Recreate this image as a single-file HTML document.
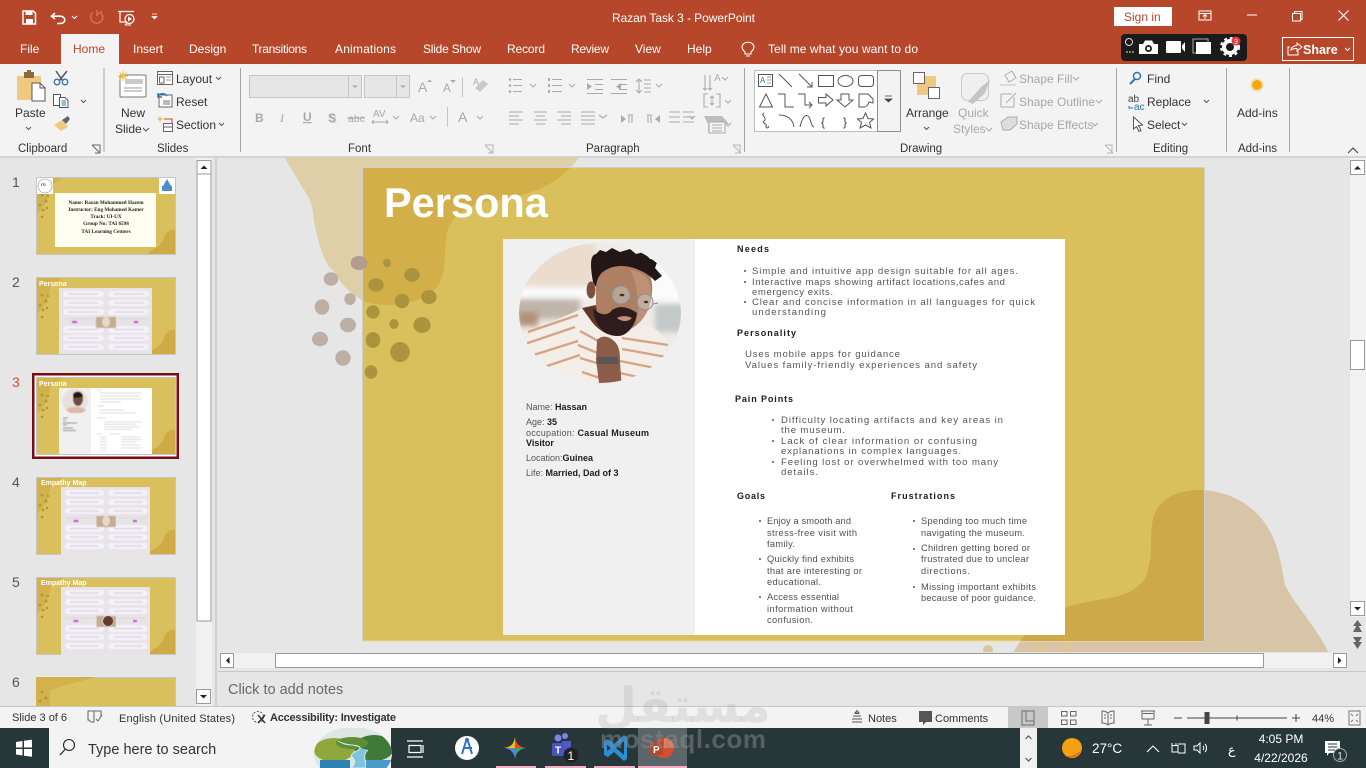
<!DOCTYPE html>
<html lang="en"><head><meta charset="utf-8"><title>Razan Task 3 - PowerPoint</title>
<style>
html,body{margin:0;padding:0;width:1366px;height:768px;overflow:hidden;background:#E6E6E6}
svg{display:block;font-family:"Liberation Sans","DejaVu Sans",sans-serif}
.t{font-size:12px;fill:#fff}
.r{font-size:12px;fill:#333}
.g{font-size:11.5px;fill:#333}
.d{font-size:12px;fill:#A8A8A8}
.s{font-size:11px;fill:#333}
.sn{font-size:9px;fill:#555}
.sb{font-size:9px;fill:#1c1c1c;font-weight:bold}
.k{fill:none;stroke:#555;stroke-width:1}
.ig{fill:none;stroke:#ABABAB;stroke-width:1.1}
.cd{fill:none;stroke:#AAA;stroke-width:1.1}
.tn{font-size:14px;fill:#555}
</style></head><body>
<svg width="1366" height="768" viewBox="0 0 1366 768" xmlns="http://www.w3.org/2000/svg">
<defs>
<clipPath id="sl"><rect x="363" y="168" width="841" height="473"/></clipPath>
<clipPath id="wk"><rect x="218" y="157" width="1132" height="495"/></clipPath>
<clipPath id="ph"><ellipse cx="600" cy="313" rx="81" ry="70"/></clipPath>
<clipPath id="art"><ellipse cx="353" cy="754" rx="39" ry="27"/></clipPath>
<filter id="bl" x="-20%" y="-20%" width="140%" height="140%"><feGaussianBlur stdDeviation="3"/></filter>
<filter id="bs"><feGaussianBlur stdDeviation=".35"/></filter>
<filter id="bt"><feGaussianBlur stdDeviation=".4"/></filter>
<path id="tb" d="M280 150L310 200C313 208 313 215 314 222C320 250 325 265 333 270C345 292 362 305 385 305C410 306 432 296 440 283C446 270 444 250 447 233C452 212 470 205 490 201C530 196 560 185 581 155Z"/>
<path id="bb" d="M1012 655C1025 630 1045 612 1065 608C1080 602 1100 600 1115 597C1135 592 1146 582 1148 570C1153 550 1150 540 1152 525C1155 500 1175 490 1200 490C1235 491 1260 510 1272 535C1280 552 1282 570 1285 585C1295 605 1315 625 1330 655Z"/>
<g id="dots">
<ellipse cx="331" cy="279" rx="7.3" ry="6.7"/><ellipse cx="322" cy="307" rx="7.3" ry="7.7"/><ellipse cx="350" cy="299" rx="5.7" ry="6"/><ellipse cx="348" cy="325" rx="8" ry="7.3"/><ellipse cx="320" cy="339" rx="8" ry="7.3"/><ellipse cx="343" cy="358" rx="7.7" ry="7.7"/>
<ellipse cx="359" cy="263" rx="8.3" ry="7"/>
<ellipse cx="387" cy="263" rx="4" ry="4.3"/><ellipse cx="376" cy="285" rx="7.7" ry="6.7"/><ellipse cx="412" cy="275" rx="7.7" ry="7"/><ellipse cx="402" cy="301" rx="7.3" ry="7.3"/><ellipse cx="429" cy="297" rx="7.7" ry="7"/><ellipse cx="373" cy="312" rx="6.7" ry="6.7"/><ellipse cx="394" cy="324" rx="4.7" ry="5"/><ellipse cx="422" cy="325" rx="8.7" ry="8"/><ellipse cx="373" cy="340" rx="7.3" ry="8"/><ellipse cx="400" cy="352" rx="9.7" ry="10"/><ellipse cx="371" cy="372" rx="6.3" ry="6.7"/>
</g>
<g id="tbase">
<rect width="140" height="78" fill="#DAC05C"/>
<path d="M0 0H28C22 5 14 7 14 13C11 24 7 34 0 36Z" fill="#D3B24C"/>
<path d="M110 78C118 70 126 70 128 60C130 54 136 52 140 53V78Z" fill="#CFAA45"/>
<g fill="#AE953F"><circle cx="6" cy="18" r="1.3"/><circle cx="10" cy="24" r="1.5"/><circle cx="4" cy="28" r="1.3"/><circle cx="12" cy="19" r="1.2"/><circle cx="7" cy="33" r="1.4"/><circle cx="11" cy="31" r="1.2"/><circle cx="6" cy="40" r="1.3"/></g>
<rect x=".5" y=".5" width="139" height="77" fill="none" stroke="#C6C6C6"/>
</g>
<g id="pills" filter="url(#bt)">
<g fill="#F6F0FA"><rect x="3" y="2" width="41" height="6" rx="3"/><rect x="48" y="2" width="41" height="6" rx="3"/><rect x="3" y="11" width="41" height="6" rx="3"/><rect x="48" y="11" width="41" height="6" rx="3"/><rect x="3" y="20" width="41" height="6" rx="3"/><rect x="48" y="20" width="41" height="6" rx="3"/><rect x="3" y="37" width="41" height="7" rx="3"/><rect x="48" y="37" width="41" height="7" rx="3"/><rect x="3" y="46" width="41" height="6" rx="3"/><rect x="48" y="46" width="41" height="6" rx="3"/><rect x="3" y="55" width="41" height="6" rx="3"/><rect x="48" y="55" width="41" height="6" rx="3"/></g>
<g stroke="#A9A6AE" stroke-width=".6"><path d="M8 5H38M54 5H84M8 14H38M54 14H84M8 23H38M54 23H84M8 40.500H38M54 40.500H84M8 49H38M54 49H84M8 58H38M54 58H84"/></g>
<rect x="36" y="28" width="20" height="11" fill="#C4AE8F"/><ellipse cx="46" cy="33" rx="4" ry="5" fill="#E8D8CC"/>
<rect x="12" y="32" width="5" height="2" fill="#C94FD8"/><rect x="74" y="32" width="4" height="2" fill="#C94FD8"/>
<path d="M5 30H34M58 30H88" stroke="#CFCFCF" stroke-width=".5"/>
</g>
</defs>

<!-- title bar -->
<rect width="1366" height="64" fill="#B7472A"/>
<rect x="61" y="34" width="58" height="31" fill="#F3F3F3"/>
<!-- QAT -->
<path d="M23 11H33L35.500 13V24H23Z" fill="none" stroke="#fff" stroke-width="1.500"/><rect x="25.500" y="11" width="7" height="4" fill="#fff"/><rect x="26" y="19" width="7" height="5" fill="#fff"/>
<path d="M55 13L51.500 16.200L55 19M52 16.200H60C63.500 16.200 64.800 18.500 64.800 20S63.500 23.500 60 23.500H57" fill="none" stroke="#fff" stroke-width="1.600"/>
<path d="M72 16L74.500 18.500L77 16" fill="none" stroke="#fff"/>
<path d="M93 12.500A6 6 0 1 0 101 13M97 10V15L102 11" fill="none" stroke="#D97350" stroke-width="1.400"/>
<path d="M118 11.500H134M120 12V22H127" fill="none" stroke="#fff" stroke-width="1.200"/><circle cx="129.500" cy="19" r="4.500" fill="none" stroke="#fff" stroke-width="1.200"/><path d="M128 16.500L132 19L128 21.500Z" fill="#fff"/><path d="M125 25H131M127 22L125 25" stroke="#fff" fill="none"/>
<path d="M152 14H157M152 16.500H157L154.500 19Z" fill="#fff" stroke="#fff" stroke-width=".7"/>
<text class="t" x="612" y="22" textLength="143">Razan Task 3  -  PowerPoint</text>
<rect x="1114" y="7" width="58" height="19" fill="#fff"/>
<text x="1124" y="21" font-size="12" fill="#B7472A">Sign in</text>
<path d="M1199 11H1211V20H1199ZM1199 13.500H1211" fill="none" stroke="#fff"/><path d="M1205 19V15M1203 16.500L1205 14.500L1207 16.500" fill="none" stroke="#fff"/>
<path d="M1247 15H1257" stroke="#fff"/>
<path d="M1292.500 13.500H1300.500V21H1292.500ZM1294.500 13V11.500H1302V19.500H1300.500" fill="none" stroke="#fff"/>
<path d="M1338.500 10.500L1348.500 20.500M1348.500 10.500L1338.500 20.500" stroke="#fff" stroke-width="1.100"/>
<!-- tabs -->
<text class="t" x="20" y="53">File</text><text x="73" y="53" font-size="12" fill="#B7472A">Home</text><text class="t" x="133" y="53">Insert</text><text class="t" x="189" y="53">Design</text><text class="t" x="252" y="53" textLength="55">Transitions</text><text class="t" x="335" y="53" textLength="61">Animations</text><text class="t" x="423" y="53" textLength="58">Slide Show</text><text class="t" x="507" y="53" textLength="38">Record</text><text class="t" x="571" y="53" textLength="38">Review</text><text class="t" x="635" y="53">View</text><text class="t" x="687" y="53">Help</text><text class="t" x="768" y="53" textLength="150">Tell me what you want to do</text>
<path d="M745 52C742 49 741 47 743 44.500C745 41.500 751 41.500 753 44.500C755 47 754 49 751 52V54H745ZM746 56H750" fill="none" stroke="#fff" stroke-width="1.100"/>
<!-- recorder -->
<rect x="1121" y="34" width="126" height="27" rx="4" fill="#1B1B1B"/>
<circle cx="1129" cy="42" r="3.500" fill="none" stroke="#ddd"/><path d="M1126 52H1128M1129 52H1131M1132 52H1134" stroke="#ddd"/>
<path d="M1139 44H1143L1145 40.500H1152L1154 44H1158V54H1139Z" fill="#fff"/><circle cx="1148.500" cy="48.500" r="3.500" fill="#1B1B1B"/><circle cx="1148.500" cy="48.500" r="1.700" fill="#fff"/>
<rect x="1166" y="41" width="15" height="12" rx="1" fill="#fff"/><path d="M1182 45.500L1185 42V52L1182 48.500Z" fill="#fff"/>
<rect x="1193" y="39" width="15" height="14" fill="none" stroke="#aaa"/><rect x="1196" y="42" width="15" height="12" fill="#fff"/>
<circle cx="1230" cy="47" r="6" fill="none" stroke="#fff" stroke-width="4"/><circle cx="1230" cy="47" r="9" fill="none" stroke="#fff" stroke-width="2" stroke-dasharray="3 3"/>
<circle cx="1236" cy="41" r="4.500" fill="#E9343B"/><text x="1234" y="44" font-size="7" fill="#fff">3</text>
<rect x="1282.500" y="37.500" width="71" height="23" fill="none" stroke="#fff"/>
<path d="M1290 47H1288V55H1298V51M1291 50C1291 47 1295 45.500 1297 45.500V43L1302 47L1297 51V48.500C1295 48.500 1292 49 1291 50Z" fill="none" stroke="#fff"/>
<text x="1303" y="54" font-size="12.500" font-weight="bold" fill="#fff">Share</text><path d="M1345 48L1347.500 50.500L1350 48" stroke="#fff" fill="none"/>

<!-- ribbon -->
<rect y="64" width="1366" height="92" fill="#F3F3F3"/><rect y="156" width="1366" height="2" fill="#D4D4D4"/>
<g fill="#A6A6A6"><rect x="103.500" y="68" width="1" height="84"/><rect x="240" y="68" width="1" height="84"/><rect x="744" y="68" width="1" height="84"/><rect x="1116" y="68" width="1" height="84"/><rect x="1226" y="68" width="1" height="84"/><rect x="1289" y="68" width="1" height="84"/></g>
<!-- clipboard -->
<rect x="17" y="76" width="24" height="24" rx="1" fill="#EFC981"/><rect x="24" y="72" width="10" height="6" fill="#8C6A3C"/><rect x="27" y="70" width="4" height="4" fill="#8C6A3C"/>
<path d="M32 83H40L45 88V101H32Z" fill="#fff" stroke="#555"/><path d="M40 83V88H45" fill="none" stroke="#555"/>
<text class="r" x="15" y="117">Paste</text><path d="M26 127L28.500 129.500L31 127" class="k"/>
<path d="M56 71L63 81M67 71L59 81" stroke="#555" stroke-width="1.500" fill="none"/><circle cx="57" cy="82" r="2.800" fill="none" stroke="#2E75B6" stroke-width="1.300"/><circle cx="65" cy="82" r="2.800" fill="none" stroke="#2E75B6" stroke-width="1.300"/>
<path d="M53.500 94.500H60.500V105.500H53.500Z" fill="#fff" stroke="#555"/><path d="M59.500 97.500H65L68 100.500V107.500H59.500Z" fill="#fff" stroke="#555"/><path d="M61.500 101H66M61.500 103H66M61.500 105H66" stroke="#2E75B6"/>
<path d="M81 100L83.500 102.500L86 100" class="k" stroke-width="1.300"/>
<path d="M54 125L62 120L68 127L61 131Z" fill="#EFC981"/><path d="M62 120L68 116L70 119L66 124Z" fill="#666"/>
<text class="g" x="18" y="152">Clipboard</text><path d="M92 145H100V153M92 145L100 153M95 153H100" fill="none" stroke="#666"/>
<!-- slides -->
<rect x="120" y="75" width="26" height="22" rx="1" fill="#fff" stroke="#777"/><rect x="125" y="79" width="18" height="5" fill="#C9C9C9"/><path d="M124 88H142M124 91H142" stroke="#999"/>
<path d="M118 76H128M123 71V81M119.500 72.500L126.500 79.500M126.500 72.500L119.500 79.500" stroke="#F2C14E"/><circle cx="123" cy="76" r="2.500" fill="#F2C14E"/>
<text class="r" x="121" y="117">New</text><text class="r" x="115" y="133">Slide</text><path d="M143 128L146 131L149 128" class="k"/>
<rect x="157.500" y="71.500" width="15" height="13" fill="#fff" stroke="#666"/><path d="M158 74.500H172M159.500 77H164V83H159.500Z" stroke="#666" fill="none"/><path d="M166 77H171M166 80H171" stroke="#999"/>
<text class="r" x="176" y="83">Layout</text><path d="M216 77L218.500 79.500L221 77" class="k"/>
<rect x="159" y="95" width="13" height="12" fill="#fff" stroke="#666"/><rect x="163" y="100" width="7" height="5" fill="#bbb"/><path d="M158 96C160 93 165 93 167 96M158 93V97H162" stroke="#2E75B6" fill="none" stroke-width="1.500"/>
<text class="r" x="176" y="106">Reset</text>
<path d="M157 119H163M160 116V122" stroke="#F2C14E"/><circle cx="160" cy="119" r="1.500" fill="#F2C14E"/><path d="M164 119H172V124H164" stroke="#D24726" fill="none"/><rect x="163.500" y="123.500" width="9" height="8" fill="#fff" stroke="#666"/><path d="M164 127H172" stroke="#666"/>
<text class="r" x="176" y="129">Section</text><path d="M219 123L221.500 125.500L224 123" class="k"/>
<text class="g" x="157" y="152">Slides</text>
<!-- font -->
<rect x="249.500" y="75.500" width="112" height="22" fill="#E6E6E6" stroke="#C6C6C6"/><path d="M348.500 76V97" stroke="#C6C6C6"/><path d="M352 85.500L355 88L358 85.500Z" fill="#ABABAB"/>
<rect x="364.500" y="75.500" width="45" height="22" fill="#E6E6E6" stroke="#C6C6C6"/><path d="M396.500 76V97" stroke="#C6C6C6"/><path d="M400 85.500L403 88L406 85.500Z" fill="#ABABAB"/>
<text x="418" y="92" font-size="14" fill="#ABABAB">A</text><path d="M427 82L429.500 79.500L432 82Z" fill="#ABABAB"/>
<text x="443" y="92" font-size="11.500" fill="#ABABAB">A</text><path d="M450 80H456L453 83Z" fill="#ABABAB"/>
<path d="M462.500 77V97" stroke="#C6C6C6"/>
<text x="473" y="85" font-size="9" fill="#ABABAB">A</text><path d="M475 88L483 80L488 84L480 92Z" fill="#C9C9C9"/>
<text x="255" y="122" font-size="12" font-weight="bold" fill="#A8A8A8">B</text>
<text x="280" y="122" font-size="12" font-style="italic" font-family="Liberation Serif" fill="#A8A8A8">I</text>
<text x="303" y="121" font-size="12" font-weight="bold" fill="#A8A8A8" text-decoration="underline">U</text>
<text x="329" y="123" font-size="12" font-weight="bold" fill="#D0D0D0">S</text><text x="328" y="122" font-size="12" font-weight="bold" fill="#A8A8A8">S</text>
<text x="348" y="122" font-size="10.500" fill="#A8A8A8">abc</text><path d="M347 118H365" stroke="#A8A8A8"/>
<text x="373" y="117" font-size="10" fill="#A8A8A8">AV</text><path d="M372 122H388M374 120L372 122L374 124M386 120L388 122L386 124" fill="none" stroke="#A8A8A8"/>
<path d="M393 116L396 119L399 116" class="cd"/>
<text x="410" y="122" font-size="12" fill="#A8A8A8">Aa</text><path d="M430 116L433 119L436 116" class="cd"/>
<path d="M447.500 107V127" stroke="#C6C6C6"/>
<text x="458" y="122" font-size="14" fill="#A8A8A8">A</text><path d="M477 116L480 119L483 116" class="cd"/>
<text class="g" x="348" y="152">Font</text><path d="M485 145H493V153H488M485 145L493 153" fill="none" stroke="#B5B5B5"/>
<!-- paragraph -->
<g fill="#ABABAB"><circle cx="510" cy="79.500" r="1.300"/><circle cx="510" cy="85.500" r="1.300"/><circle cx="510" cy="91.500" r="1.300"/><rect x="548" y="78" width="2" height="3"/><rect x="548" y="84" width="2" height="3"/><rect x="548" y="90" width="2" height="3"/></g>
<g class="ig">
<path d="M513 79.500H522M513 85.500H522M513 91.500H522M552 79.500H562M552 85.500H562M552 91.500H562"/><path d="M587 79.500H603M595 84.500H603M595 89.500H603M587 93.500H603M611 79.500H627M619 84.500H627M619 89.500H627M611 93.500H627"/>
<path d="M639 80V92M636 82L639 79L642 82M636 90L639 93L642 90M644 80H651M644 84H651M644 88H651M644 92H651"/>
<path d="M530 84L533 87L536 84M569 84L572 87L575 84M656 84L659 87L662 84"/>
<path d="M509 112H523M509 116H519M509 120H523M509 124H519M534 112H547M536 116H545M534 120H547M536 124H545M557 112H571M561 116H571M557 120H571M561 124H571M581 112H595M581 116H595M581 120H595M581 124H595"/>
<path d="M599 115L603 118L607 115"/>
<path d="M629 115V123M632 115V123M628 115H633"/>
<path d="M648 115V123M651 115V123M647 115H652"/>
<path d="M669 112H680M683 112H694M669 117H680M683 117H694M669 122H680M683 122H694"/>
<path d="M689 0"/><path d="M689 116L692 119L695 116" transform="translate(0 0)"/>
<path d="M705 75V90M710 75V90M703 88L705 90L707 88M708 88L710 90L712 88"/>
<path d="M722 77L725 80L728 77"/>
<path d="M708 94H704V107H708M716 94H720V107H716M712 97V104M710 98L712 96L714 98M710 103L712 105L714 103"/>
<path d="M725 100L728 103L731 100"/>
<path d="M725 123L728 126L731 123"/>
</g>
<path d="M587 83L592 86.500L587 90M621 83L616 86.500L621 90M621 115L626 119L621 123ZM660 115L655 119L660 123Z" fill="#ABABAB" transform="translate(0 0)"/>
<text x="714" y="81" font-size="10" fill="#ABABAB">A</text>
<path d="M704 116H722L729 124H712V132H708V124Z" fill="#BDBDBD"/><rect x="709" y="122" width="16" height="11" fill="#F3F3F3" stroke="#ABABAB"/><path d="M712 125H722M712 128H722M712 131H722" stroke="#ABABAB"/>
<text class="g" x="586" y="152">Paragraph</text><path d="M733 145H740V153H735M733 145L741 153" fill="none" stroke="#B5B5B5"/>
<!-- shapes -->
<rect x="754.500" y="70.500" width="146" height="61" fill="#fff" stroke="#BDBDBD"/>
<rect x="877.500" y="70.500" width="23" height="61" fill="#F3F3F3" stroke="#8E8E8E"/>
<path d="M885 96H892M885 99H892L888.500 102Z" fill="#444" stroke="#444" stroke-width=".7"/>
<g fill="none" stroke="#555" stroke-width="1">
<rect x="758.500" y="74.500" width="14" height="12"/><text x="760" y="83" font-size="8" fill="#2E75B6" stroke="none">A</text><path d="M767 77H771M767 80H771M767 83H771" stroke="#999"/>
<path d="M779 74L792 87M799 74L812 87M807 87H812V82"/>
<rect x="818.500" y="75.500" width="15" height="11"/><ellipse cx="845.500" cy="81" rx="7.500" ry="5.500"/><rect x="858.500" y="75.500" width="15" height="11" rx="3"/>
<path d="M766 94L772.500 107H759.500Z"/>
<path d="M778 94H785V107H794M798 94H805V105H812M809 102L812 105L809 108"/>
<path d="M818.500 97.500H826V94L833 100L826 106V103H818.500Z"/><path d="M841 94H849V100H853L845 107L837 100H841Z"/>
<path d="M859 94H868L873 99V103L869 102C868 105 866 107 864 107H859Z"/>
<path d="M764 113C760 115 768 118 764 121C761 123 768 124 766 126C765 129 770 128 768 126"/>
<path d="M779 115C787 115 793 119 794 127M800 127C802 118 805 114 808 116C811 118 811 127 814 127"/>
<text x="821" y="126" font-size="12" fill="#444" stroke="none">{</text><text x="843" y="126" font-size="12" fill="#444" stroke="none">}</text>
<path d="M865.500 113L868 118.500L873.500 119L869.500 122.500L871 128L865.500 125L860 128L861.500 122.500L857.500 119L863 118.500Z"/>
</g>
<!-- arrange -->
<rect x="917" y="76" width="19" height="19" fill="#EFC981"/>
<rect x="913.500" y="72.500" width="11" height="11" fill="#fff" stroke="#666"/>
<rect x="928.500" y="87.500" width="11" height="11" fill="#fff" stroke="#666"/>
<text class="r" x="906" y="117">Arrange</text><path d="M924 127L926.500 129.500L929 127" class="k"/>
<text class="g" x="900" y="152">Drawing</text><path d="M1105 145H1112V153H1107M1105 145L1113 153" fill="none" stroke="#B5B5B5"/>
<rect x="961.500" y="73.500" width="27" height="27" rx="6" fill="#EFEFEF" stroke="#C9C9C9"/><path d="M968 102L981 87L990 80L985 93L973 104Z" fill="#C4C4C4"/>
<text class="d" x="958" y="117">Quick</text><text class="d" x="953" y="133">Styles</text><path d="M986 128L989 131L992 128" class="cd"/>
<path d="M1005 75L1012 71L1016 78L1009 82Z" fill="none" stroke="#ABABAB"/><rect x="1000" y="84" width="16" height="2" fill="#DADADA"/>
<text class="d" x="1019" y="83">Shape Fill</text><path d="M1073 77L1076 80L1079 77" class="cd"/>
<path d="M1001 94H1012M1001 94V107H1014V97M1006 103L1016 93" fill="none" stroke="#ABABAB"/>
<text class="d" x="1019" y="106">Shape Outline</text><path d="M1096 100L1099 103L1102 100" class="cd"/>
<path d="M1001 122L1008 117H1017V124L1010 130H1003Z" fill="#ddd" stroke="#ABABAB"/>
<text class="d" x="1019" y="129">Shape Effects</text><path d="M1092 123L1095 126L1098 123" class="cd"/>
<!-- editing -->
<circle cx="1137" cy="76" r="3.500" fill="none" stroke="#2E75B6" stroke-width="1.500"/><path d="M1135 79L1130 84" stroke="#2E75B6" stroke-width="2"/>
<text class="r" x="1147" y="83">Find</text>
<text x="1128" y="102" font-size="10" fill="#444">ab</text><text x="1134" y="110" font-size="10" fill="#2E75B6">ac</text><path d="M1129 106V108H1133" stroke="#2E75B6" fill="none"/>
<text class="r" x="1147" y="106">Replace</text><path d="M1204 100L1206.500 102.500L1209 100" class="k" stroke-width="1.300"/>
<path d="M1133.500 117L1133.500 129L1136.500 126.500L1139 131.500L1141 130.500L1138.500 125.500L1142.500 125Z" fill="#fff" stroke="#555"/>
<text class="r" x="1147" y="129">Select</text><path d="M1182 123L1184.500 125.500L1187 123" class="k"/>
<text class="g" x="1153" y="152">Editing</text>
<!-- addins -->
<circle cx="1257" cy="85" r="5" fill="#F5A70A"/><circle cx="1257" cy="85" r="6" fill="none" stroke="#F5D48A"/>
<text class="r" x="1237" y="117">Add-ins</text><text class="g" x="1238" y="152">Add-ins</text>
<path d="M1348 153L1353 148L1358 153" fill="none" stroke="#444" stroke-width="1.100"/>

<!-- workspace -->
<rect y="158" width="1366" height="548" fill="#E6E6E6"/>
<g clip-path="url(#wk)">
<use href="#tb" fill="#DFCFA8"/><use href="#bb" fill="#D8C5A8"/>
<g fill="#DDC79A"><circle cx="988" cy="650" r="5"/><circle cx="1040" cy="652" r="7"/><circle cx="1066" cy="650" r="8"/></g>
<use href="#dots" fill="#BDAFA5"/>
<rect x="363" y="168" width="841" height="473" fill="#DAC05C"/>
<rect x="362" y="167" width="843" height="1" fill="#CFCFCF"/><rect x="362" y="168" width="1" height="473" fill="#CFCFCF"/><rect x="1204" y="168" width="1" height="474" fill="#CFCFCF"/>
<rect x="363" y="640.500" width="841" height="1" fill="#EEDCA0"/>
<g clip-path="url(#sl)">
<use href="#tb" fill="#D2AF48"/><use href="#bb" fill="#CDA947"/>
<use href="#dots" fill="#AC933E"/>
</g>
<ellipse cx="359" cy="263" rx="8.300" ry="7" fill="#B39C8F"/>
</g>
<text x="384" y="217" font-size="41.500" font-weight="bold" fill="#fff">Persona</text>
<!-- persona card -->
<rect x="503" y="239" width="562" height="396" fill="#fff"/><rect x="503" y="239" width="192" height="396" fill="#F0F0F0"/>
<!-- photo -->
<g clip-path="url(#ph)">
<rect x="518" y="243" width="164" height="141" fill="#EFEBE8"/>
<g filter="url(#bl)">
<rect x="510" y="240" width="85" height="46" fill="#EBDDCE"/><rect x="510" y="288" width="85" height="10" fill="#FCFCFC"/><rect x="510" y="299" width="70" height="20" fill="#BFB5A8"/><rect x="640" y="240" width="45" height="62" fill="#FBFBFB"/><rect x="655" y="304" width="30" height="28" fill="#C3C8C8"/><rect x="518" y="312" width="20" height="14" fill="#B08F74"/>
</g>
<g filter="url(#bs)">
<path d="M519 345C535 325 565 318 584 307L592 322C600 330 625 340 640 328C650 322 662 330 672 352L670 390H530Z" fill="#F4EEE9"/>
<g stroke="#D6A484" stroke-width="2.400" fill="none"><path d="M528 332L578 315M522 345L575 327M524 358L578 341M532 371L580 355M580 331L600 342M578 345L600 354M580 358L600 364M582 372L600 378M622 338L668 345M622 349L672 358M620 361L670 371M620 373L660 382"/></g>
<path d="M582 308L592 322C600 332 612 338 620 335L628 322L620 300Z" fill="#60392B"/>
<path d="M596 285C593 268 603 258 620 258C642 258 654 272 652 292C651 310 642 325 626 331C610 335 598 325 596 305Z" fill="#AE7F62"/>
<path d="M630 270C645 272 652 280 651 295C650 308 645 318 636 325C640 305 638 285 630 270Z" fill="#BE9176"/>
<ellipse cx="591" cy="290" rx="4.500" ry="8.500" fill="#7C5040"/>
<path d="M593 308C600 316 608 316 612 310C620 305 628 307 637 313C636 324 628 336 618 336C604 336 594 325 593 308Z" fill="#2D1F1B"/>
<path d="M617 318C622 315 628 316 632 318C628 322 622 322 617 318Z" fill="#C58F7C"/>
<path d="M593 282C590 265 590 255 596 254L600 250L606 252L612 248L620 252L630 249L636 254L644 252L650 259L658 260L655 268L662 276L655 281C645 270 625 262 610 268C602 271 597 276 596 287Z" fill="#201613"/>
<circle cx="621" cy="295" r="9" fill="#C7D0CF" fill-opacity=".45" stroke="#8B8F8E"/><circle cx="645" cy="302" r="8" fill="#C7D0CF" fill-opacity=".45" stroke="#8B8F8E"/><path d="M599 284L612 291M630 297L637 299M653 304L658 303" stroke="#8B8F8E"/>
<ellipse cx="622" cy="295" rx="2.400" ry="1.300" fill="#3A3533"/><ellipse cx="646" cy="302" rx="2.200" ry="1.200" fill="#3A3533"/>
<path d="M597 340C603 334 610 337 615 342C620 347 620 355 620 362L622 390H600L596 360Z" fill="#8B5C46"/>
<rect x="597" y="357" width="21" height="7" fill="#5A5654"/>
</g>
</g>
<!-- left info -->
<text class="sn" x="526" y="410">Name: <tspan class="sb">Hassan</tspan></text>
<text class="sn" x="526" y="425">Age: <tspan class="sb">35</tspan></text>
<text class="sn" x="526" y="436" textLength="123">occupation: <tspan class="sb">Casual Museum</tspan></text>
<text class="sb" x="526" y="446">Visitor</text>
<text class="sn" x="526" y="461">Location:<tspan class="sb">Guinea</tspan></text>
<text class="sn" x="526" y="476">Life: <tspan class="sb">Married, Dad of 3</tspan></text>
<!-- right info -->
<g font-size="9" font-weight="bold" fill="#1C1C1C">
<text x="737" y="252" textLength="32">Needs</text><text x="737" y="336" textLength="59">Personality</text><text x="735" y="402" textLength="58">Pain Points</text><text x="737" y="499" textLength="28">Goals</text><text x="891" y="499" textLength="64">Frustrations</text>
</g>
<g font-size="9.600" fill="#555">
<text x="752" y="274" textLength="266">Simple and intuitive app design suitable for all ages.</text>
<text x="752" y="285" textLength="253">Interactive maps showing artifact locations,cafes and</text>
<text x="752" y="295" textLength="81">emergency exits.</text>
<text x="752" y="305" textLength="283">Clear and concise information in all languages for quick</text>
<text x="752" y="315" textLength="74">understanding</text>
<text x="745" y="357" textLength="155">Uses mobile apps for guidance</text>
<text x="745" y="368" textLength="232">Values family-friendly experiences and safety</text>
<text x="781" y="423" textLength="222">Difficulty locating artifacts and key areas in</text>
<text x="781" y="433" textLength="64">the museum.</text>
<text x="781" y="444" textLength="196">Lack of clear information or confusing</text>
<text x="781" y="454" textLength="180">explanations in complex languages.</text>
<text x="781" y="465" textLength="217">Feeling lost or overwhelmed with too many</text>
<text x="781" y="475" textLength="37">details.</text>
</g>
<g font-size="9.300" fill="#4F4F4F">
<text x="767" y="524" textLength="84">Enjoy a smooth and</text><text x="767" y="536" textLength="90">stress-free visit with</text><text x="767" y="547" textLength="28">family.</text>
<text x="767" y="562" textLength="87">Quickly find exhibits</text><text x="767" y="574" textLength="95">that are interesting or</text><text x="767" y="585" textLength="54">educational.</text>
<text x="767" y="600" textLength="72">Access essential</text><text x="767" y="612" textLength="86">information without</text><text x="767" y="623" textLength="46">confusion.</text>
<text x="921" y="524" textLength="106">Spending too much time</text><text x="921" y="536" textLength="104">navigating the museum.</text>
<text x="921" y="551" textLength="109">Children getting bored or</text><text x="921" y="562" textLength="108">frustrated due to unclear</text><text x="921" y="574" textLength="49">directions.</text>
<text x="921" y="590" textLength="115">Missing important exhibits</text><text x="921" y="601" textLength="115">because of poor guidance.</text>
</g>
<g fill="#555"><circle cx="745" cy="271" r="1"/><circle cx="745" cy="282" r="1"/><circle cx="745" cy="302" r="1"/><circle cx="773" cy="420" r="1"/><circle cx="773" cy="441" r="1"/><circle cx="773" cy="462" r="1"/><circle cx="760" cy="521" r="1"/><circle cx="760" cy="559" r="1"/><circle cx="760" cy="597" r="1"/><circle cx="914" cy="521" r="1"/><circle cx="914" cy="549" r="1"/><circle cx="914" cy="587" r="1"/></g>

<!-- thumbnail pane -->
<rect y="158" width="196" height="548" fill="#E6E6E6"/>
<rect x="215" y="158" width="2" height="548" fill="#D0D0D0"/>
<text class="tn" x="12" y="187">1</text>
<text class="tn" x="12" y="287">2</text>
<text x="12" y="387" font-size="14" fill="#D2502E">3</text>
<text class="tn" x="12" y="487">4</text>
<text class="tn" x="12" y="587">5</text>
<text class="tn" x="12" y="687">6</text>
<rect x="32" y="373" width="147" height="86" fill="#7A0C14"/><rect x="34.500" y="375.500" width="142" height="81" fill="#fff"/>
<svg x="36" y="177" width="140" height="78" viewBox="0 0 140 78">
<use href="#tbase"/><rect x="1" y="1" width="16" height="16" fill="#fff"/><circle cx="9" cy="9" r="7" fill="#fff" stroke="#8D8DB0" stroke-width=".6"/><text x="5" y="9" font-size="4" font-weight="bold" fill="#334">ITI</text>
<rect x="123" y="1" width="16" height="16" fill="#fff"/><path d="M127 9L131 2L135 9ZM126 9H136V14H126Z" fill="#4C8FC4"/>
<rect x="19" y="16" width="101" height="54" fill="#FFFEF0"/>
<g font-family="Liberation Serif" font-size="5.200" font-weight="bold" fill="#222" text-anchor="middle"><text x="70" y="27">Name: Razan Mohammed Hazem</text><text x="70" y="34">Instructor: Eng Mohamed Kamer</text><text x="70" y="41">Track: UI-UX</text><text x="70" y="48">Group No: TAI 6598</text><text x="70" y="56">TAI Learning Centers</text></g>
</svg>
<svg x="36" y="277" width="140" height="78" viewBox="0 0 140 78">
<use href="#tbase"/><text x="3" y="9" font-size="7" font-weight="bold" fill="#fff">Persona</text>
<rect x="23" y="11" width="93" height="66" fill="#E6E4E5"/><g transform="translate(24 12)"><use href="#pills"/></g>
</svg>
<svg x="36" y="377" width="140" height="78" viewBox="0 0 140 78">
<use href="#tbase"/><text x="3" y="9" font-size="7" font-weight="bold" fill="#fff">Persona</text>
<rect x="23" y="11" width="93" height="66" fill="#fff"/><rect x="23" y="11" width="32" height="66" fill="#F0F0F0"/>
<g filter="url(#bt)"><ellipse cx="39" cy="24" rx="13" ry="12" fill="#E8E2DC"/><path d="M30 33C34 29 46 29 50 33L46 36H34Z" fill="#D9B9A8"/><ellipse cx="42" cy="22" rx="5" ry="7" fill="#6E4E40"/><path d="M37 17C40 13 47 14 47 20L37 21Z" fill="#201613"/>
<g stroke="#777" stroke-width=".7"><path d="M27 41H32M27 43.500H30M27 46H41M27 48H31M27 51H37M27 53.500H40"/></g>
<g stroke="#BBB" stroke-width=".6"><path d="M61 13H65M64 16H105M64 19H104M64 22H106M64 25H85M61 29H68M63 33H88M63 36H100M61 41H70M68 45H106M68 47.500H100M68 50H104M68 52.500H96M61 57H66M74 57H84M64 60H70M64 62.500H70M64 65H71M64 68H71M64 71H71M64 74H70M85 60H104M85 62.500H106M85 65H100M85 68H104M85 71H106"/></g></g>
</svg>
<svg x="36" y="477" width="140" height="78" viewBox="0 0 140 78">
<use href="#tbase"/><text x="5" y="8" font-size="7" font-weight="bold" fill="#fff">Empathy Map</text>
<rect x="25" y="10" width="89" height="68" fill="#E6E4E5"/><g transform="translate(26 11) scale(.96 1)"><use href="#pills"/></g>
</svg>
<svg x="36" y="577" width="140" height="78" viewBox="0 0 140 78">
<use href="#tbase"/><text x="5" y="8" font-size="7" font-weight="bold" fill="#fff">Empathy Map</text>
<rect x="25" y="10" width="89" height="68" fill="#E6E4E5"/><g transform="translate(26 11) scale(.96 1)"><use href="#pills"/></g><circle cx="72" cy="44" r="5" fill="#5E3E30"/>
</svg>
<svg x="36" y="677" width="140" height="29" viewBox="0 0 140 29">
<use href="#tbase"/><path d="M14 14C25 8 40 6 60 0H0V29H14Z" fill="#D3B24C"/><g fill="#AE953F"><circle cx="6" cy="15" r="1.300"/><circle cx="10" cy="21" r="1.500"/><circle cx="4" cy="24" r="1.300"/></g>
</svg>
<!-- left scrollbar -->
<rect x="196" y="158" width="16" height="548" fill="#F1F1F1"/>
<rect x="197" y="174" width="14" height="447" fill="#fff" stroke="#9A9A9A"/>
<rect x="197" y="160.500" width="14" height="13.500" fill="#fff" stroke="#9A9A9A"/><path d="M200.500 169L204 165.500L207.500 169Z" fill="#222"/>
<rect x="196.500" y="689.500" width="14" height="14" fill="#fff" stroke="#9A9A9A"/><path d="M200 695L203.500 698.500L207 695Z" fill="#222"/>
<!-- right scrollbar -->
<rect x="1350" y="158" width="16" height="495" fill="#F1F1F1"/>
<rect x="1350.500" y="160.500" width="14" height="14" fill="#fff" stroke="#9A9A9A"/><path d="M1354 169.500L1357.500 166L1361 169.500Z" fill="#222"/>
<rect x="1350.500" y="340.500" width="14" height="29" fill="#fff" stroke="#9A9A9A"/>
<rect x="1350.500" y="601.500" width="14" height="14" fill="#fff" stroke="#9A9A9A"/><path d="M1354 607L1357.500 610.500L1361 607Z" fill="#222"/>
<rect x="1350" y="617" width="16" height="36" fill="#E6E6E6"/>
<path d="M1357.500 620L1362 626H1353ZM1357.500 624L1362 632H1353ZM1353 637H1362L1357.500 644ZM1353 642H1362L1357.500 649Z" fill="#666"/>
<!-- horizontal scrollbar -->
<rect x="218" y="652" width="1148" height="19" fill="#E6E6E6"/>
<rect x="220" y="653" width="1127" height="15" fill="#F1F1F1"/>
<rect x="220.500" y="653.500" width="13" height="14" fill="#fff" stroke="#9A9A9A"/><path d="M229.500 657L226 660.500L229.500 664Z" fill="#222"/>
<rect x="275.500" y="653.500" width="988" height="14" fill="#fff" stroke="#9A9A9A"/>
<rect x="1333.500" y="653.500" width="13" height="14" fill="#fff" stroke="#9A9A9A"/><path d="M1338 657L1341.500 660.500L1338 664Z" fill="#222"/>
<rect x="218" y="671" width="1148" height="1" fill="#C8C8C8"/>
<text x="228" y="694" font-size="14.500" fill="#686868">Click to add notes</text>

<!-- status bar -->
<rect y="706" width="1366" height="1" fill="#C6C6C6"/><rect y="707" width="1366" height="21" fill="#F3F3F3"/>
<text class="s" x="12" y="721">Slide 3 of 6</text>
<path d="M88 711H94V722H91L89 720H88ZM94 711H101V717M96 719L98 721L102 715" fill="none" stroke="#666"/>
<text class="s" x="119" y="722" textLength="116">English (United States)</text>
<circle cx="258" cy="717" r="5.500" fill="none" stroke="#555" stroke-dasharray="2 1.500"/><path d="M258 715L265 723M265 715L258 723" stroke="#333" stroke-width="1.500"/>
<text x="270" y="721" font-size="11" font-weight="bold" fill="#333" textLength="126">Accessibility: Investigate</text>
<path d="M852 722H862M852 719H862M853 716H861M855 713.500H859M857 710.500L859 713H855Z" stroke="#555" fill="none"/>
<text class="s" x="868" y="722">Notes</text>
<path d="M919 711H932V722H926L923 725V722H919Z" fill="#555"/>
<text class="s" x="935" y="722">Comments</text>
<rect x="1008" y="707" width="40" height="21" fill="#C8C8C8"/>
<path d="M1022 711H1034V725H1022ZM1026 711V721H1034" fill="none" stroke="#6A6A6A"/>
<path d="M1061.500 711.500H1067V716H1061.500ZM1070.500 711.500H1076V716H1070.500ZM1061.500 720H1067V724.500H1061.500ZM1070.500 720H1076V724.500H1070.500Z" fill="none" stroke="#666"/>
<path d="M1108 713C1105 711 1103 711 1102 711V723C1104 723 1106 723 1108 725C1110 723 1112 723 1114 723V711C1112 711 1110 711 1108 713V725M1104 715H1106M1104 718H1106M1110 715H1112M1110 718H1112" fill="none" stroke="#666"/>
<path d="M1141 711H1155M1142 711V719H1154V711M1148 719V725M1144 725H1152M1143 713.500H1153" fill="none" stroke="#666"/>
<path d="M1174 718H1182M1292 718H1300M1296 714V722M1187 718H1287M1237 715.500V720.500" stroke="#444" fill="none"/>
<rect x="1204.500" y="712" width="5" height="12" fill="#444"/>
<text class="s" x="1312" y="722">44%</text>
<path d="M1349 711H1360V725H1349ZM1351 714L1353 716M1358 714L1356 716M1351 722L1353 720M1358 722L1356 720" fill="none" stroke="#777"/>

<!-- taskbar -->
<rect y="728" width="1366" height="40" fill="#273639"/>
<path d="M16 742L22.500 741V747.500H16ZM24 740.800L32 739.600V747.500H24ZM16 749H22.500V755.500L16 754.500ZM24 749H32V756.800L24 755.700Z" fill="#fff"/>
<rect x="49" y="728" width="342" height="40" fill="#F3F3F3"/>
<circle cx="69" cy="745" r="5.500" fill="none" stroke="#222" stroke-width="1.100"/><path d="M65 749.500L60 755" stroke="#222" stroke-width="1.200"/>
<text x="88" y="754" font-size="14.500" fill="#333">Type here to search</text>
<!-- search art -->
<g clip-path="url(#art)">
<rect x="314" y="728" width="78" height="40" fill="#DCE6E4"/>
<ellipse cx="334" cy="750" rx="20" ry="12" fill="#8FA83C"/><ellipse cx="374" cy="748" rx="20" ry="13" fill="#3F7A3A"/><ellipse cx="352" cy="743" rx="16" ry="6" fill="#5F8F34"/>
<path d="M338 741C346 746 350 744 358 746C366 750 348 752 352 757C358 762 352 768 350 768H366C366 760 362 755 368 750" fill="#7FC3DC" stroke="#D3E8EE"/>
<rect x="320" y="760" width="30" height="8" fill="#2F81B5"/><rect x="366" y="760" width="25" height="8" fill="#4B9ACA"/>
</g>
<!-- task icons -->
<path d="M408 741H424M408 757H424M410 745.500H422V752.500H410ZM424 745V753" stroke="#fff" fill="none" stroke-width="1.200" transform="translate(-1 0)"/>
<circle cx="467" cy="748" r="12" fill="#fff"/><path d="M467 738L472 754M467 738L462 754M463 748H472" stroke="#2F6FD0" stroke-width="2" fill="none"/><circle cx="467" cy="740" r="2" fill="#2F6FD0"/>
<path d="M515 737C516 744 519 747 526 748C519 749 516 753 515 759C514 753 511 749 504 748C511 747 514 744 515 737Z" fill="#4E86E8"/><path d="M515 737C516 744 519 747 526 748H515Z" fill="#EA4335"/><path d="M504 748C511 747 514 744 515 737V748Z" fill="#FBBC04"/><path d="M515 759C516 753 519 749 526 748H515Z" fill="#34A853"/>
<circle cx="565" cy="736" r="3" fill="#7B83EB"/><circle cx="558" cy="738" r="3.500" fill="#7B83EB"/><path d="M562 741H571V752H562Z" fill="#5059C9"/><rect x="552" y="743" width="13" height="13" rx="1.500" fill="#4B53BC"/><text x="555" y="753.500" font-size="10" font-weight="bold" fill="#fff">T</text>
<circle cx="571" cy="755" r="7.500" fill="#222"/><text x="567.500" y="760" font-size="12" fill="#fff">1</text>
<path d="M624 735L614 744L608 739L604 741V755L608 757L614 752L624 761L627 759V737ZM624 741V755L616 748ZM607 745L611 748L607 751Z" fill="#2C8ED6"/>
<rect x="638" y="728" width="49" height="40" fill="#5A6669"/>
<circle cx="664" cy="748" r="10" fill="#D2502E"/><path d="M664 738A10 10 0 0 1 674 748H664Z" fill="#F07B56"/><rect x="650" y="742" width="13" height="13" rx="1.500" fill="#B7472A"/><text x="653" y="753" font-size="10" font-weight="bold" fill="#fff">P</text>
<g fill="#F2AFC0"><rect x="496" y="766" width="40" height="2"/><rect x="545" y="766" width="41" height="2"/><rect x="594" y="766" width="41" height="2"/><rect x="638" y="766" width="49" height="2"/></g>
<!-- watermark -->
<text x="683" y="722" font-size="48" font-weight="bold" fill="#777" fill-opacity=".15" text-anchor="middle" direction="rtl" style="font-family:'DejaVu Sans',sans-serif">مستقل</text>
<text x="600" y="748" font-size="26" font-weight="bold" fill="#8A8A8A" fill-opacity=".5" textLength="166">mostaql.com</text>
<!-- right tray -->
<rect x="1020" y="728" width="17" height="40" fill="#F1F1F1"/>
<path d="M1025.500 739L1028.500 736L1031.500 739M1025.500 758L1028.500 761L1031.500 758" fill="none" stroke="#555" stroke-width="1.200"/>
<circle cx="1072" cy="748" r="10" fill="#F3A012"/><path d="M1066 756C1072 757 1078 754 1081 750A10 10 0 0 1 1066 756Z" fill="#DD6A1E"/>
<text x="1092" y="753" font-size="13.500" fill="#fff">27°C</text>
<path d="M1147 752L1153 746L1159 752" fill="none" stroke="#fff" stroke-width="1.100"/>
<path d="M1172 745.500H1178V752H1172ZM1178 744H1185V753H1178M1172 743V745M1176 743V745" fill="none" stroke="#fff"/>
<path d="M1194 746H1197L1200 743V753L1197 750H1194ZM1203 746C1204 747 1204 749 1203 750M1205 744C1207 746 1207 750 1205 752" fill="none" stroke="#fff"/>
<text x="1228" y="754" font-size="12.500" fill="#fff">ع</text>
<text x="1281" y="743" font-size="12" fill="#fff" text-anchor="middle">4:05 PM</text>
<text x="1281" y="762" font-size="12" fill="#fff" text-anchor="middle">4/22/2026</text>
<path d="M1325 741H1340V753H1329L1327 756V753H1325Z" fill="#fff"/><path d="M1328 744H1337M1328 747H1337M1328 750H1335" stroke="#273639"/>
<circle cx="1340" cy="755" r="6.500" fill="#273639" stroke="#aaa"/><text x="1337" y="759.500" font-size="11" fill="#ddd">1</text>
</svg>
</body></html>
